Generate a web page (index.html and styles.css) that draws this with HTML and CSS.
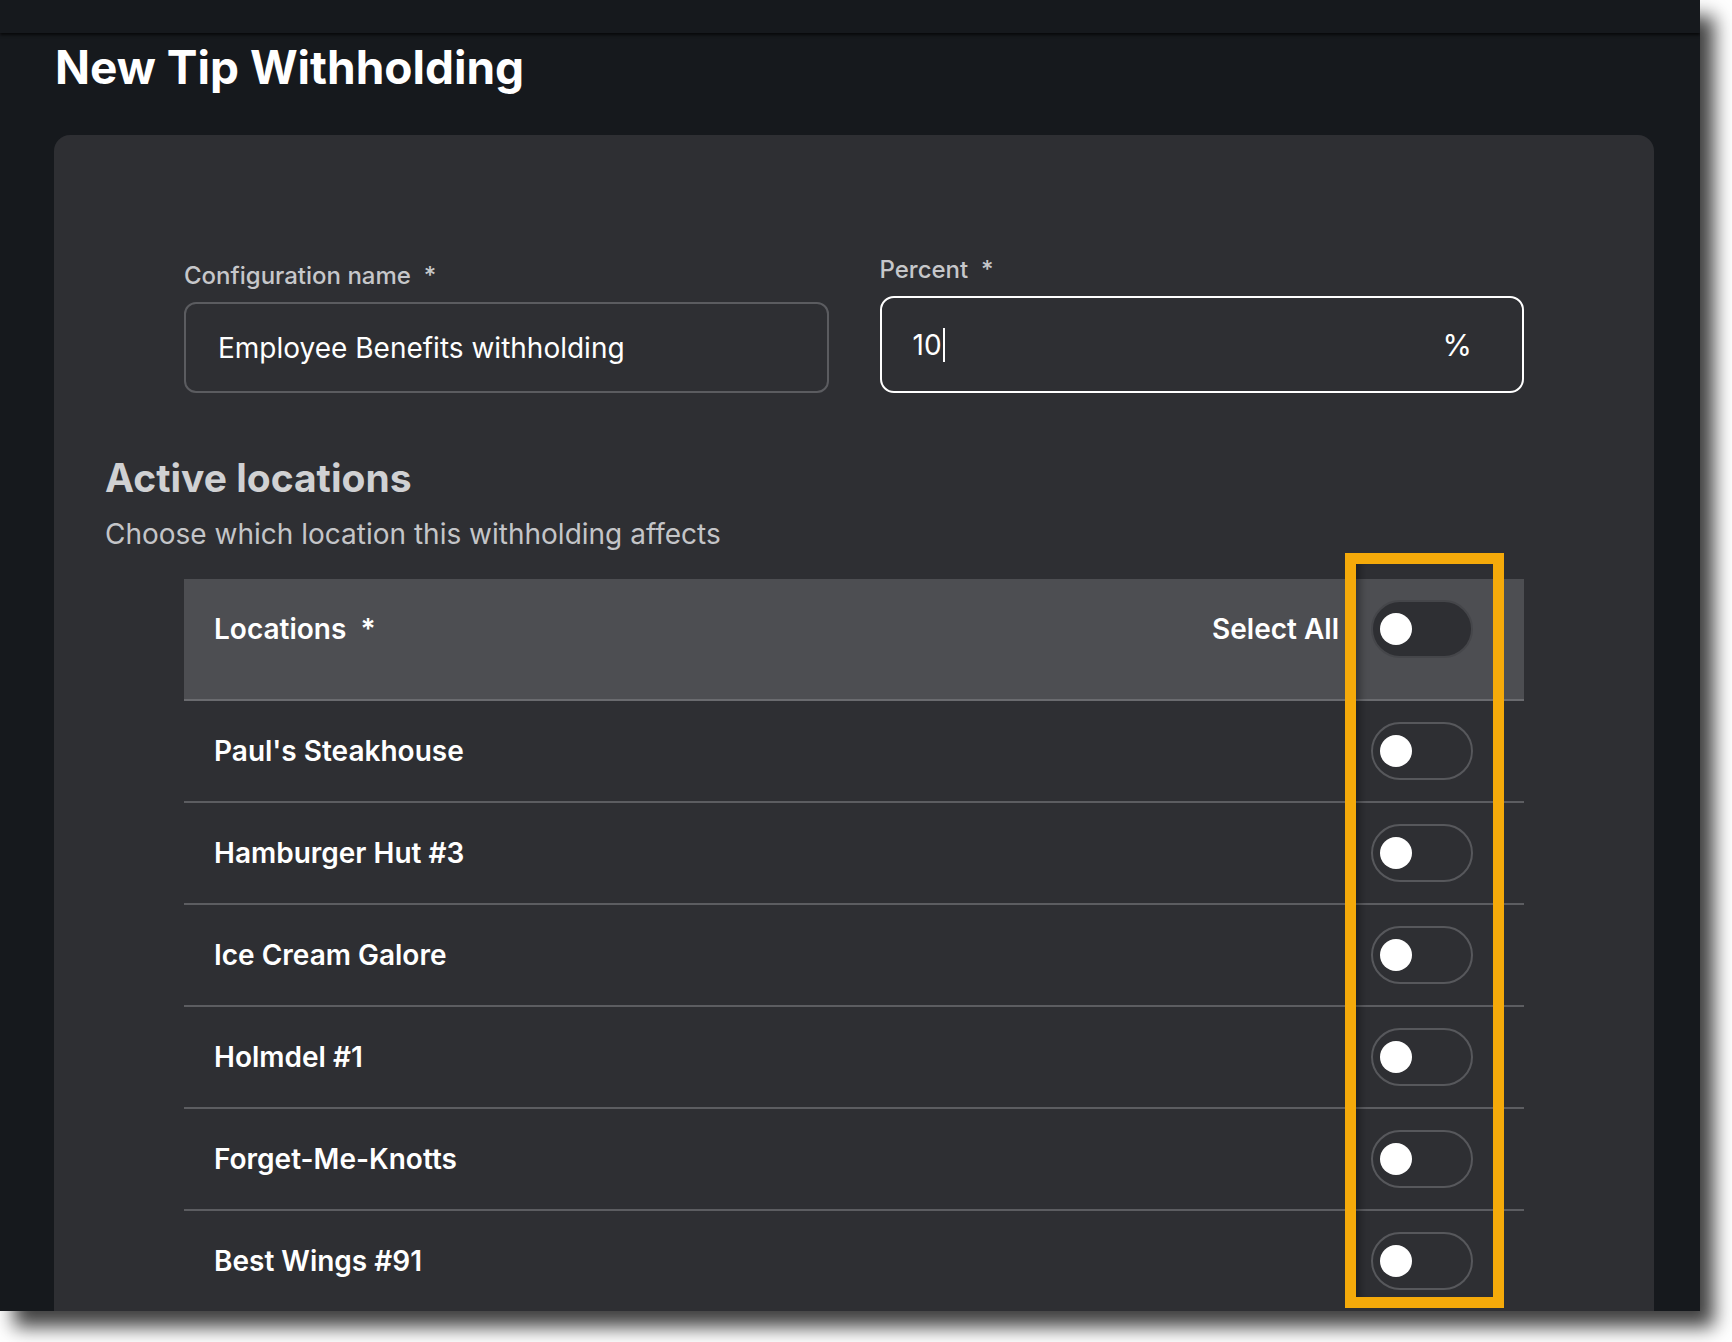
FILE: index.html
```html
<!doctype html>
<html>
<head>
	<meta charset="utf-8">
	<title>New Tip Withholding</title>
	<link rel="stylesheet" href="styles.css">
</head>
<body>
	<div class="frame">
		<div class="topbar"></div>
		<h1 class="page-title">New Tip Withholding</h1>
		<div class="card">
			<div class="fields">
				<div class="field">
					<label class="field-label">Configuration name&nbsp; *</label>
					<div class="input">Employee Benefits withholding</div>
				</div>
				<div class="field">
					<label class="field-label">Percent&nbsp; *</label>
					<div class="input input-focus">
						<span class="value">10<span class="caret"></span></span>
						<span class="suffix">%</span>
					</div>
				</div>
			</div>

			<h2 class="section-title">Active locations</h2>
			<p class="section-sub">Choose which location this withholding affects</p>

			<div class="table">
				<div class="row row-head">
					<span class="row-name">Locations&nbsp; *</span>
					<span class="select-all">Select All</span>
					<span class="toggle toggle-head"><span class="knob"></span></span>
				</div>
				<div class="row">
					<span class="row-name">Paul's Steakhouse</span>
					<span class="toggle"><span class="knob"></span></span>
				</div>
				<div class="row">
					<span class="row-name">Hamburger Hut #3</span>
					<span class="toggle"><span class="knob"></span></span>
				</div>
				<div class="row">
					<span class="row-name">Ice Cream Galore</span>
					<span class="toggle"><span class="knob"></span></span>
				</div>
				<div class="row">
					<span class="row-name">Holmdel #1</span>
					<span class="toggle"><span class="knob"></span></span>
				</div>
				<div class="row">
					<span class="row-name">Forget-Me-Knotts</span>
					<span class="toggle"><span class="knob"></span></span>
				</div>
				<div class="row">
					<span class="row-name">Best Wings #91</span>
					<span class="toggle"><span class="knob"></span></span>
				</div>
				<div class="highlight"></div>
			</div>
		</div>
	</div>
</body>
</html>
```

FILE: styles.css
```css
html {
	background: #ffffff;
}
body {
	margin: 0;
	min-height: 1342px;
	font-family: "Inter", "Liberation Sans", sans-serif;
}
.frame {
	position: relative;
	width: 1700px;
	height: 1311px;
	background: #16191d;
	overflow: hidden;
	box-shadow: 14px 16px 18px rgba(0, 0, 0, 0.75);
}
.topbar {
	height: 33px;
	background: #16191d;
	box-shadow: 0 2px 3px rgba(0, 0, 0, 0.7);
	position: relative;
}
.page-title {
	margin: 0 0 0 55px;
	height: 102px;
	font-size: 46px;
	line-height: 68px;
	font-weight: 700;
	color: #ffffff;
}
.card {
	margin-left: 54px;
	width: 1600px;
	height: 1300px;
	background: #2e2f33;
	border-radius: 16px;
	padding: 121px 0 0 0;
	box-sizing: border-box;
}
.fields {
	display: flex;
	align-items: flex-end;
	gap: 51px;
	margin: 0 130px;
}
.field {
	flex: 1;
}
.field-label {
	display: block;
	font-size: 24px;
	line-height: 28px;
	font-weight: 500;
	color: #c6c7ca;
	margin-bottom: 12px;
}
.input {
	height: 91px;
	border: 2px solid #5b5c60;
	border-radius: 12px;
	box-sizing: border-box;
	padding: 0 32px;
	display: flex;
	align-items: center;
	font-size: 28px;
	color: #ffffff;
}
.input-focus {
	height: 97px;
	border-color: #ffffff;
	border-radius: 14px;
	justify-content: space-between;
	padding: 0 50px 0 31px;
}
.caret {
	display: inline-block;
	width: 2px;
	height: 34px;
	background: #ffffff;
	vertical-align: -7px;
	margin-left: 1px;
}
.suffix {
	font-size: 30px;
}
.section-title {
	margin: 61px 0 0 51px;
	font-size: 39px;
	line-height: 48px;
	font-weight: 700;
	color: #d0d1d3;
}
.section-sub {
	margin: 15px 0 0 51px;
	font-size: 28px;
	line-height: 34px;
	color: #c4c5c8;
}
.table {
	position: relative;
	margin: 28px 130px 0;
}
.row {
	display: flex;
	align-items: center;
	height: 100px;
	padding: 0 51px 0 30px;
	border-bottom: 2px solid #5c5d61;
	font-size: 28px;
	font-weight: 600;
	color: #ffffff;
}
.row-head {
	height: 122px;
	align-items: flex-start;
	padding-top: 21px;
	box-sizing: border-box;
	background: #4d4e52;
	border-bottom-color: #6a6b6f;
}
.row-head .row-name,
.row-head .select-all {
	line-height: 58px;
}
.row-name {
	flex: 1;
}
.select-all {
	margin-right: 32px;
}
.toggle {
	width: 102px;
	height: 58px;
	border: 2px solid #57585c;
	border-radius: 29px;
	box-sizing: border-box;
	background: #2e2f33;
	display: flex;
	align-items: center;
	padding-left: 7px;
}
.toggle-head {
	border-color: #45464a;
}
.knob {
	width: 32px;
	height: 32px;
	border-radius: 50%;
	background: #ffffff;
}
.highlight {
	position: absolute;
	top: -26px;
	right: 20px;
	width: 159px;
	height: 755px;
	border: 11px solid #f5aa0a;
	box-sizing: border-box;
	box-shadow: inset 10px 0 8px -6px rgba(0, 0, 0, 0.35);
}
```
